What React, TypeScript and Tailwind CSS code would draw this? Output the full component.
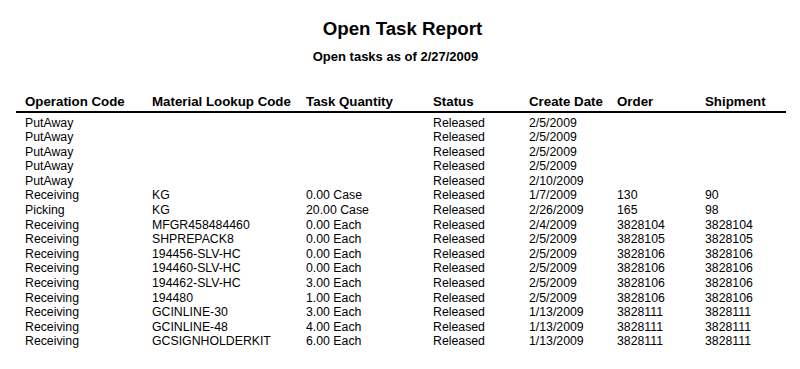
type Task = {
  op: string;
  material: string;
  qty: string;
  status: string;
  created: string;
  order: string;
  shipment: string;
};

const tasks: Task[] = [
  { op: "PutAway", material: "", qty: "", status: "Released", created: "2/5/2009", order: "", shipment: "" },
  { op: "PutAway", material: "", qty: "", status: "Released", created: "2/5/2009", order: "", shipment: "" },
  { op: "PutAway", material: "", qty: "", status: "Released", created: "2/5/2009", order: "", shipment: "" },
  { op: "PutAway", material: "", qty: "", status: "Released", created: "2/5/2009", order: "", shipment: "" },
  { op: "PutAway", material: "", qty: "", status: "Released", created: "2/10/2009", order: "", shipment: "" },
  { op: "Receiving", material: "KG", qty: "0.00 Case", status: "Released", created: "1/7/2009", order: "130", shipment: "90" },
  { op: "Picking", material: "KG", qty: "20.00 Case", status: "Released", created: "2/26/2009", order: "165", shipment: "98" },
  { op: "Receiving", material: "MFGR458484460", qty: "0.00 Each", status: "Released", created: "2/4/2009", order: "3828104", shipment: "3828104" },
  { op: "Receiving", material: "SHPREPACK8", qty: "0.00 Each", status: "Released", created: "2/5/2009", order: "3828105", shipment: "3828105" },
  { op: "Receiving", material: "194456-SLV-HC", qty: "0.00 Each", status: "Released", created: "2/5/2009", order: "3828106", shipment: "3828106" },
  { op: "Receiving", material: "194460-SLV-HC", qty: "0.00 Each", status: "Released", created: "2/5/2009", order: "3828106", shipment: "3828106" },
  { op: "Receiving", material: "194462-SLV-HC", qty: "3.00 Each", status: "Released", created: "2/5/2009", order: "3828106", shipment: "3828106" },
  { op: "Receiving", material: "194480", qty: "1.00 Each", status: "Released", created: "2/5/2009", order: "3828106", shipment: "3828106" },
  { op: "Receiving", material: "GCINLINE-30", qty: "3.00 Each", status: "Released", created: "1/13/2009", order: "3828111", shipment: "3828111" },
  { op: "Receiving", material: "GCINLINE-48", qty: "4.00 Each", status: "Released", created: "1/13/2009", order: "3828111", shipment: "3828111" },
  { op: "Receiving", material: "GCSIGNHOLDERKIT", qty: "6.00 Each", status: "Released", created: "1/13/2009", order: "3828111", shipment: "3828111" },
];

const headers = [
  "Operation Code",
  "Material Lookup Code",
  "Task Quantity",
  "Status",
  "Create Date",
  "Order",
  "Shipment",
];

// column grid shared by header + rows
const cols = "grid grid-cols-[127px_154px_127px_96px_88px_88px_1fr]";

export default function App() {
  return (
    <div className="w-[800px] h-[369px] bg-white text-black overflow-hidden font-['Liberation_Sans',Arial,sans-serif]">
      {/* ---- Title ---- */}
      <div className="pt-[18px] pl-[5px] text-center text-[18.7px] leading-[22px] font-bold">
        Open Task Report
      </div>
      <div className="mt-[9px] pr-[9px] text-center text-[13px] leading-[16px] font-bold">
        Open tasks as of 2/27/2009
      </div>

      {/* ---- Table ---- */}
      <div className="mt-[29px] ml-[16px] w-[770px]">
        <div className={`${cols} pl-[9px] pb-[1px] text-[13.3px] leading-[16px] font-bold border-b-2 border-black`}>
          {headers.map((h) => (
            <div key={h} className="whitespace-nowrap">
              {h}
            </div>
          ))}
        </div>

        <div className="pt-[2.5px]">
          {tasks.map((t, i) => (
            <div
              key={i}
              className={`${cols} pl-[9px] h-[14.6px] text-[12.3px] leading-[14.6px] whitespace-nowrap`}
            >
              <div>{t.op}</div>
              <div>{t.material}</div>
              <div>{t.qty}</div>
              <div>{t.status}</div>
              <div>{t.created}</div>
              <div>{t.order}</div>
              <div>{t.shipment}</div>
            </div>
          ))}
        </div>
      </div>
    </div>
  );
}
